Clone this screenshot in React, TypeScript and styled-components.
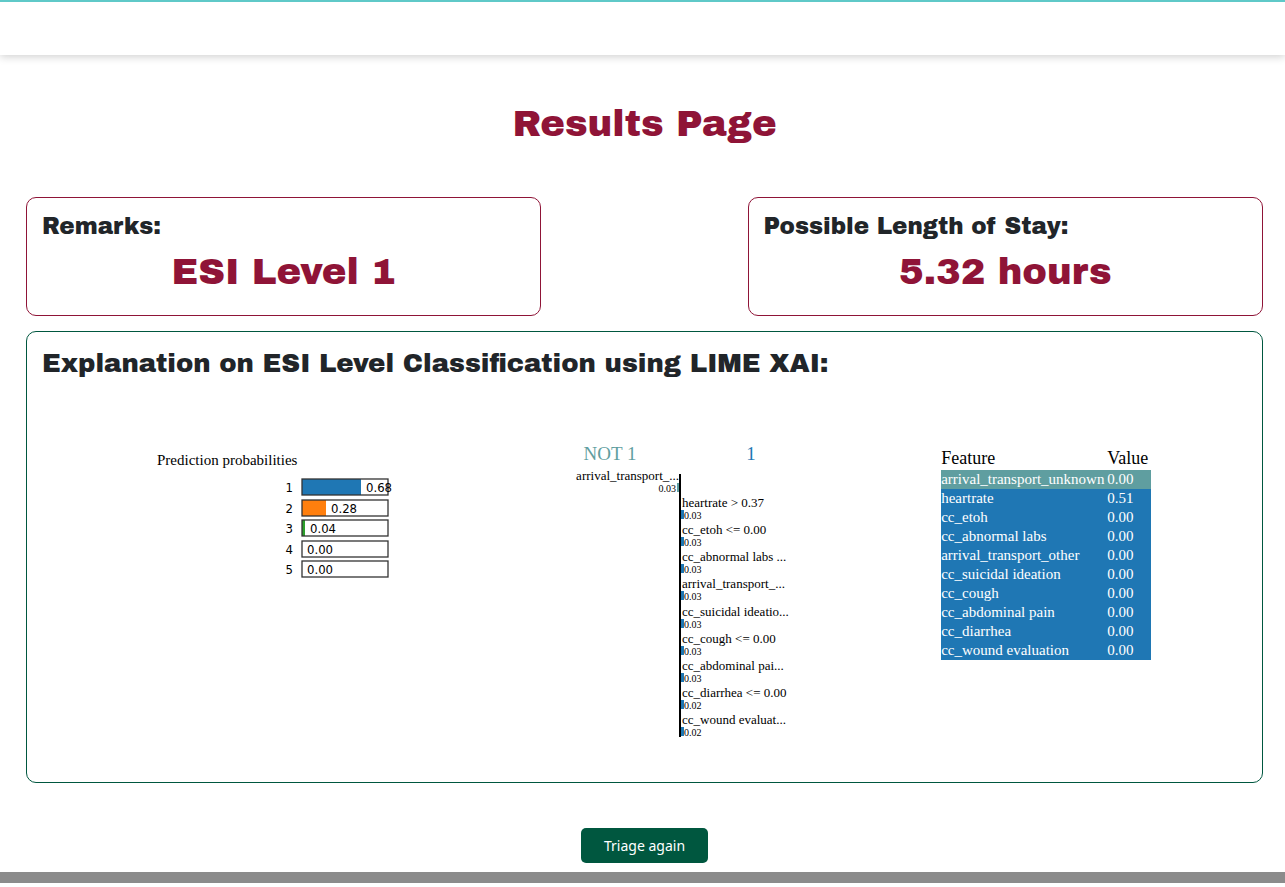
import React from "react";
import styled, { createGlobalStyle } from "styled-components";

const maroon = "#8f1437";
const green = "#00573f";
const ink = "#212529";
const blue = "#1f77b4";
const teal = "#5f9ea0";
const display = '"Archivo Black", "DejaVu Sans", sans-serif';

const GlobalStyle = createGlobalStyle`
  *, *::before, *::after { box-sizing: border-box; }
  body { margin: 0; background: #fff; color: ${ink}; font-family: "Noto Sans", sans-serif; }
  h1, h2, p { margin: 0; }
`;

const Header = styled.header`
  height: 55px;
  border-top: 2px solid #5fc9c8;
  background: #fff;
  box-shadow: 0 2px 8px rgba(0, 0, 0, 0.18);
`;

const Main = styled.main`
  display: flex;
  flex-direction: column;
  padding: 45px 22px 9px 26px;
`;

const Title = styled.h1`
  font: 400 37px/48px ${display};
  color: ${maroon};
  text-align: center;
`;

const Summary = styled.div`
  display: flex;
  justify-content: space-between;
  margin: 49px 0 15px;
`;

const Card = styled.section<{ $accent: string }>`
  border: 1px solid ${(p) => p.$accent};
  border-radius: 10px;
  padding: 15px;
`;

const SummaryCard = styled(Card)`
  width: calc(100% * 5 / 12);
  padding-bottom: 19px;
`;

const CardLabel = styled.h2<{ $large?: boolean }>`
  font: 400 ${(p) => (p.$large ? "26px/32px" : "23px/28px")} ${display};
`;

const CardValue = styled.p`
  margin-top: 7px;
  font: 400 37px/48px ${display};
  color: ${maroon};
  text-align: center;
`;

const Explanation = styled.div`
  display: grid;
  grid-template-columns: repeat(3, 1fr);
  justify-items: center;
  align-items: start;
  padding: 66px 0 26px;
`;

const Chart = styled.svg`
  display: block;
  overflow: visible;
  font-family: "Liberation Serif", serif;
`;

const FeatureTable = styled.table`
  margin-top: 2px;
  width: 210px;
  border-collapse: collapse;
  font: 15px/19px "Liberation Serif", serif;
  color: #fff;

  th {
    padding: 0 1px 0 0;
    font-size: 18px;
    line-height: 23px;
    font-weight: 400;
    color: #000;
    text-align: left;
  }
  td { padding: 0 1px 0 0; white-space: nowrap; }
  th:first-child { width: 166px; }
`;

const FeatureRow = styled.tr<{ $negative?: boolean }>`
  background: ${(p) => (p.$negative ? teal : blue)};
`;

const TriageButton = styled.button`
  align-self: center;
  margin-top: 45px;
  width: 127px;
  height: 35px;
  border: 0;
  border-radius: 5px;
  background: ${green};
  color: #fff;
  font: 14px/20px "Noto Sans", sans-serif;
  cursor: pointer;
`;

const Footer = styled.footer`
  height: 11px;
  background: #8b8b8b;
`;

const probabilities = [
  { label: "1", value: 0.68, color: "#1f77b4" },
  { label: "2", value: 0.28, color: "#ff7f0e" },
  { label: "3", value: 0.04, color: "#2ca02c" },
  { label: "4", value: 0, color: "#d62728" },
  { label: "5", value: 0, color: "#9467bd" },
];

const conditions = [
  { text: "arrival_transport_...", weight: "0.03", negative: true },
  { text: "heartrate > 0.37", weight: "0.03" },
  { text: "cc_etoh <= 0.00", weight: "0.03" },
  { text: "cc_abnormal labs ...", weight: "0.03" },
  { text: "arrival_transport_...", weight: "0.03" },
  { text: "cc_suicidal ideatio...", weight: "0.03" },
  { text: "cc_cough <= 0.00", weight: "0.03" },
  { text: "cc_abdominal pai...", weight: "0.03" },
  { text: "cc_diarrhea <= 0.00", weight: "0.02" },
  { text: "cc_wound evaluat...", weight: "0.02" },
];

const features = [
  ["arrival_transport_unknown", "0.00"],
  ["heartrate", "0.51"],
  ["cc_etoh", "0.00"],
  ["cc_abnormal labs", "0.00"],
  ["arrival_transport_other", "0.00"],
  ["cc_suicidal ideation", "0.00"],
  ["cc_cough", "0.00"],
  ["cc_abdominal pain", "0.00"],
  ["cc_diarrhea", "0.00"],
  ["cc_wound evaluation", "0.00"],
];

function ProbabilityChart() {
  return (
    <Chart width="298" height="140" role="img" aria-label="Prediction probabilities">
      <text x="63" y="20" fontSize="15">Prediction probabilities</text>
      {probabilities.map(({ label, value, color }, i) => {
        const top = 34 + Math.round(i * 20.6);
        const bar = Math.round(value * 87);
        return (
          <g key={label} fontFamily='"DejaVu Sans Condensed", "DejaVu Sans", sans-serif' fontSize="13">
            <text x="199" y={top + 13} textAnchor="end">{label}</text>
            <rect x="208" y={top} width={bar} height="16" fill={color} />
            <rect x="208" y={top} width="86" height="16" fill="none" stroke="#333" strokeWidth="1.3" />
            <text x={208 + bar + 5} y={top + 13}>{value.toFixed(2)}</text>
          </g>
        );
      })}
    </Chart>
  );
}

function WeightChart() {
  return (
    <Chart width="288" height="296" role="img" aria-label="Feature weights">
      <text x="110" y="15" fontSize="19" textAnchor="middle" fill={teal}>NOT 1</text>
      <text x="251" y="15" fontSize="19" textAnchor="middle" fill={blue}>1</text>
      {conditions.map(({ text, weight, negative }, i) => {
        const top = 29 + Math.round(i * 27.1);
        const anchor = negative ? "end" : "start";
        return (
          <g key={i} textAnchor={anchor}>
            <text x={negative ? 179 : 182} y={top + 6} fontSize="13">{text}</text>
            <rect x={negative ? 177 : 181} y={top + 9} width="3" height="9" fill={negative ? teal : blue} />
            <text x={negative ? 176 : 184} y={top + 18} fontSize="10">{weight}</text>
          </g>
        );
      })}
      <line x1="180" x2="180" y1="29" y2="292" stroke="#000" strokeWidth="2" />
    </Chart>
  );
}

export default function App() {
  return (
    <>
      <GlobalStyle />
      <Header />
      <Main>
        <Title>Results Page</Title>
        <Summary>
          <SummaryCard $accent={maroon}>
            <CardLabel>Remarks:</CardLabel>
            <CardValue>ESI Level 1</CardValue>
          </SummaryCard>
          <SummaryCard $accent={maroon}>
            <CardLabel>Possible Length of Stay:</CardLabel>
            <CardValue>5.32 hours</CardValue>
          </SummaryCard>
        </Summary>
        <Card $accent={green}>
          <CardLabel $large>Explanation on ESI Level Classification using LIME XAI:</CardLabel>
          <Explanation>
            <ProbabilityChart />
            <WeightChart />
            <FeatureTable>
              <thead>
                <tr>
                  <th scope="col">Feature</th>
                  <th scope="col">Value</th>
                </tr>
              </thead>
              <tbody>
                {features.map(([name, value], i) => (
                  <FeatureRow key={name} $negative={i === 0}>
                    <td>{name}</td>
                    <td>{value}</td>
                  </FeatureRow>
                ))}
              </tbody>
            </FeatureTable>
          </Explanation>
        </Card>
        <TriageButton type="button">Triage again</TriageButton>
      </Main>
      <Footer />
    </>
  );
}
